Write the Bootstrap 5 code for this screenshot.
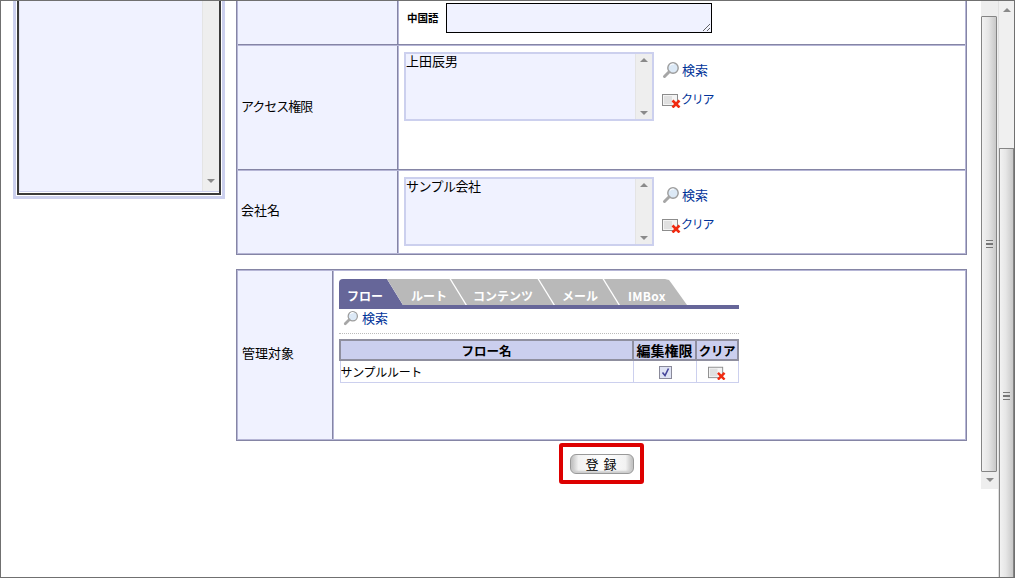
<!DOCTYPE html>
<html lang="ja">
<head>
<meta charset="utf-8">
<title>管理対象</title>
<link rel="stylesheet" href="https://cdn.jsdelivr.net/npm/bootstrap@5.3.0/dist/css/bootstrap.min.css">
<style>
html,body{margin:0;height:100%;overflow:hidden;background:#fff}
body{font-family:"Noto Sans CJK JP","Liberation Sans",sans-serif;font-size:13px;line-height:1.2;color:#000}
.frame{width:1015px;height:578px;border:1px solid #707070;overflow:hidden}
.content{width:980px;height:576px;flex:none}
.side-wrap{width:212px;height:198px;margin-left:12px;margin-right:11px;flex:none;background:#fff;border:3px solid #ccd0ee;border-top:0;padding:0 1px 1px}
.side-inner{height:100%;border:2px solid #3a3a3a;border-top:0;background:#fff;padding-bottom:1px}
.side-body{background:#f0f2ff;border-bottom:1px solid #ccd0ee;border-left:1px solid #e2e4f4}
.sb-track{width:17px;background:#eeeeee;border-left:1px solid #e4e4e4;color:#777;flex:none}
.arrow-up,.arrow-down{width:0;height:0;border-left:4px solid transparent;border-right:4px solid transparent}
.arrow-up{border-bottom:4px solid #8a8a8a}
.arrow-down{border-top:4px solid #8a8a8a}
.main-col{width:731px;flex:none}
.grid-box{border:solid #8585a5;border-width:0 1px 1px 1px;background:#b6b6d6;padding:0 1px 1px 1px}
.grid-row{background:#fff;border-bottom:1px solid #8585a5}
.grid-row + .grid-row{border-top:1px solid #b6b6d6}
.grid-row:last-child{border-bottom:0}
.row-a{height:44px}
.row-b{height:125px}
.row-c{height:83px}
.label-cell{width:160px;flex:none;background:#f0f2ff;border-right:1px solid #8585a5;padding:0 0 4px 3px}
.value-cell{padding:6px 0 0 5px;border-left:1px solid #b6b6d6;flex:1}
.tight-one{letter-spacing:-1px}
.tight-half{letter-spacing:-.5px}
.lang-label{font-size:10.5px;font-weight:700;width:42px;padding:5px 0 0 3px}
.lang-input{width:266px;height:30px;background:#f0f2ff;border:1px solid #000;display:block;margin-top:-4px;padding:0}
.pick-box{width:250px;height:69px;border:2px solid #ccd0ee;background:#f0f2ff;padding:0;line-height:14px;flex:none}
.pick-text{flex:1}
.pick-links{margin-left:8px;padding-top:3px}
.act-link{color:#003399;font-size:13px;text-decoration:none;line-height:16px}
.act-clear{font-size:12px;letter-spacing:-1.2px}
.act-search{margin-left:2px}
.act-row{height:29px}
.second-box{margin-top:14px;border:1px solid #8585a5;background:#b6b6d6;padding:1px;height:172px}
.label-two{width:95px;flex:none;background:#f0f2ff;border-right:1px solid #8585a5;padding:0 0 4px 4px}
.value-two{padding:8px 0 0 5px;border-left:1px solid #b6b6d6;background:#fff;flex:1}
.tab-strip{width:400px;height:30px;border-bottom:4px solid #666699;padding:0}
.tab-item{height:26px;position:relative;color:#fff;font-size:12px;font-weight:700;margin-right:-16px;display:flex;align-items:center;padding-left:24px;padding-top:9px;flex:none;
  clip-path:polygon(0 0,calc(100% - 16px) 0,100% 100%,0 100%);background:#fff}
.tab-item::before{content:"";position:absolute;inset:0;right:1.5px;background:#b9b9b9;clip-path:polygon(0 0,calc(100% - 16px) 0,100% 100%,0 100%)}
.tab-item span{position:relative}
.tab-one{width:64px;padding-left:8px;z-index:5;border-top-left-radius:4px}
.tab-one::before{background:#666699;right:0;border-top-left-radius:4px}
.tab-two{width:80px;z-index:4}
.tab-three{width:104px;z-index:3;padding-left:22px}
.tab-four{width:81px;z-index:2;padding-left:23px}
.tab-five{width:83px;z-index:1;padding-left:24px;letter-spacing:.3px;background:transparent;clip-path:none}
.tab-five::before{right:0;clip-path:polygon(0 0,calc(100% - 22px) 0,calc(100% - 18px) 1px,calc(100% - 15px) 5px,100% 100%,0 100%)}
.search-row{width:400px;height:25px;border-bottom:1px dotted #bbb;padding:0 0 7px 4px}
.search-row .act-link{margin-left:3px}
.data-tbl{width:400px;border-collapse:collapse;margin-top:5px;table-layout:fixed;font-size:12px}
.data-tbl th{background:#cbcfee;border:2px solid #8f8f9f;height:20px;font-weight:700;text-align:center;padding:0;font-size:12.5px}
.data-tbl th.head-wide{font-size:14px;letter-spacing:0}
.data-tbl th.head-narrow{font-size:12.5px;letter-spacing:-.4px}
.data-tbl td{border:1px solid #ccd0ee;height:22px;padding:1px 0 0}
.data-tbl td.mid{text-align:center;padding:0}
.name-text{letter-spacing:-.3px}
.fake-check{width:13px;height:13px;border:1px solid #8a8a9a;background:#dfe3f4;display:inline-flex;vertical-align:middle;margin-left:2px}
.submit-zone{height:60px}
.red-box{width:85px;height:41px;border:4px solid #dd0000;border-radius:3px;margin-top:2px}
.reg-btn{width:64px;height:20px;padding:0;font-size:13px;letter-spacing:1px;line-height:18px;border:1px solid #999;border-radius:6px;color:#000;background:linear-gradient(to right,#bbb 0,#f2f2f2 12%,#fff 50%,#f2f2f2 88%,#bbb 100%);box-shadow:inset 0 -2px 2px #ccc}
.inner-sb{width:17px;height:488px;flex:none;background:#eeeeee;position:relative}
.thumb{background:linear-gradient(to right,#f2f2f2,#e6e6e6 45%,#c8c8c8);border:1px solid #858585;border-radius:1px;margin-right:1px}
.thumb-in{height:456px;margin-top:15px}
.sb-foot{height:16px}
.grip{width:7px;height:8px;border-top:1px solid #777;border-bottom:1px solid #777;position:relative}
.grip::before{content:"";position:absolute;left:0;right:0;top:2px;height:2px;border-top:1px solid #777;border-bottom:1px solid #777}
.outer-sb{width:16px;flex:none;background:#f0f0f0;border-left:1px solid #e0e0e0;position:relative}
.thumb-out{margin-top:147px;height:440px;margin-bottom:-20px;border-bottom:0;margin-right:0}
.top-arrow{height:17px;margin-bottom:-17px}
.outer-thumb-grip{margin-top:243px}
</style>
</head>
<body>
<svg width="0" height="0" class="d-block" aria-hidden="true">
  <defs>
    <symbol id="ic-search" viewBox="0 0 18 18">
      <circle cx="11" cy="7" r="5.2" fill="#dce9f6" stroke="#9c9c9c" stroke-width="1.4"/>
      <path d="M8 4.5 A3.6 3.6 0 0 1 12 3.2" fill="none" stroke="#fff" stroke-width="1.2"/>
      <path d="M7 11 L2.5 15.5" stroke="#a6a6a6" stroke-width="3" stroke-linecap="round"/>
    </symbol>
    <symbol id="ic-clear" viewBox="0 0 19 18">
      <rect x="0.5" y="4.5" width="15" height="11" fill="#f4f4f4" stroke="#8c8c8c"/>
      <rect x="2" y="6" width="8" height="8" fill="#e0e0e0"/>
      <path d="M10.5 10.5 L17.5 17.5 M17.5 10.5 L10.5 17.5" stroke="#f02a10" stroke-width="2.6"/>
    </symbol>
  </defs>
</svg>
<div class="frame d-flex">
  <div class="content d-flex align-items-start">
    <div class="side-wrap">
      <div class="side-inner d-flex">
        <div class="side-body d-flex flex-grow-1">
          <div class="flex-grow-1"></div>
          <div class="sb-track d-flex flex-column justify-content-end align-items-center pb-2"><div class="arrow-down"></div></div>
        </div>
      </div>
    </div>
    <div class="main-col">
      <div class="grid-box">
        <div class="grid-row row-a d-flex">
          <div class="label-cell"></div>
          <div class="value-cell d-flex align-items-start">
            <div class="lang-label">中国語</div>
            <textarea class="lang-input" aria-label="中国語"></textarea>
          </div>
        </div>
        <div class="grid-row row-b d-flex">
          <div class="label-cell d-flex align-items-center"><span class="tight-one">アクセス権限</span></div>
          <div class="value-cell d-flex align-items-start">
            <div class="pick-box d-flex">
              <div class="pick-text">上田辰男</div>
              <div class="sb-track d-flex flex-column justify-content-between align-items-center py-1"><div class="arrow-up"></div><div class="arrow-down"></div></div>
            </div>
            <div class="pick-links">
              <div class="act-row d-flex align-items-center"><svg width="18" height="18"><use href="#ic-search"/></svg><a class="act-link act-search" href="#">検索</a></div>
              <div class="act-row d-flex align-items-center"><svg width="19" height="18"><use href="#ic-clear"/></svg><a class="act-link act-clear" href="#">クリア</a></div>
            </div>
          </div>
        </div>
        <div class="grid-row row-c d-flex">
          <div class="label-cell d-flex align-items-center">会社名</div>
          <div class="value-cell d-flex align-items-start">
            <div class="pick-box d-flex">
              <div class="pick-text tight-half">サンプル会社</div>
              <div class="sb-track d-flex flex-column justify-content-between align-items-center py-1"><div class="arrow-up"></div><div class="arrow-down"></div></div>
            </div>
            <div class="pick-links">
              <div class="act-row d-flex align-items-center"><svg width="18" height="18"><use href="#ic-search"/></svg><a class="act-link act-search" href="#">検索</a></div>
              <div class="act-row d-flex align-items-center"><svg width="19" height="18"><use href="#ic-clear"/></svg><a class="act-link act-clear" href="#">クリア</a></div>
            </div>
          </div>
        </div>
      </div>
      <div class="second-box d-flex">
        <div class="label-two d-flex align-items-center">管理対象</div>
        <div class="value-two">
          <div class="tab-strip d-flex">
            <div class="tab-item tab-one"><span>フロー</span></div>
            <div class="tab-item tab-two"><span>ルート</span></div>
            <div class="tab-item tab-three"><span>コンテンツ</span></div>
            <div class="tab-item tab-four"><span>メール</span></div>
            <div class="tab-item tab-five"><span>IMBox</span></div>
          </div>
          <div class="search-row d-flex align-items-center"><svg width="16" height="16"><use href="#ic-search"/></svg><a class="act-link" href="#">検索</a></div>
          <table class="data-tbl">
            <colgroup><col><col style="width:63px"><col style="width:42px"></colgroup>
            <thead><tr><th>フロー名</th><th class="head-wide">編集権限</th><th class="head-narrow">クリア</th></tr></thead>
            <tbody><tr>
              <td class="name-text">サンプルルート</td>
              <td class="mid"><span class="fake-check"><svg width="11" height="11" viewBox="0 0 11 11"><path d="M2.5 5.5 L5 8.5 L8.5 1.5" fill="none" stroke="#44449a" stroke-width="1.6"/></svg></span></td>
              <td class="mid"><svg width="18" height="17"><use href="#ic-clear"/></svg></td>
            </tr></tbody>
          </table>
        </div>
      </div>
      <div class="submit-zone d-flex justify-content-center">
        <div class="red-box d-flex align-items-center justify-content-center">
          <button type="button" class="btn reg-btn">登 録</button>
        </div>
      </div>
    </div>
  </div>
  <div class="inner-sb d-flex flex-column">
    <div class="thumb thumb-in d-flex align-items-center justify-content-center"><div class="grip"></div></div>
    <div class="sb-foot d-flex align-items-center justify-content-center"><div class="arrow-down"></div></div>
  </div>
  <div class="outer-sb">
    <div class="top-arrow d-flex align-items-center justify-content-center"><div class="arrow-up"></div></div>
    <div class="thumb thumb-out d-flex justify-content-center"><div class="grip outer-thumb-grip"></div></div>
  </div>
</div>
</body>
</html>
